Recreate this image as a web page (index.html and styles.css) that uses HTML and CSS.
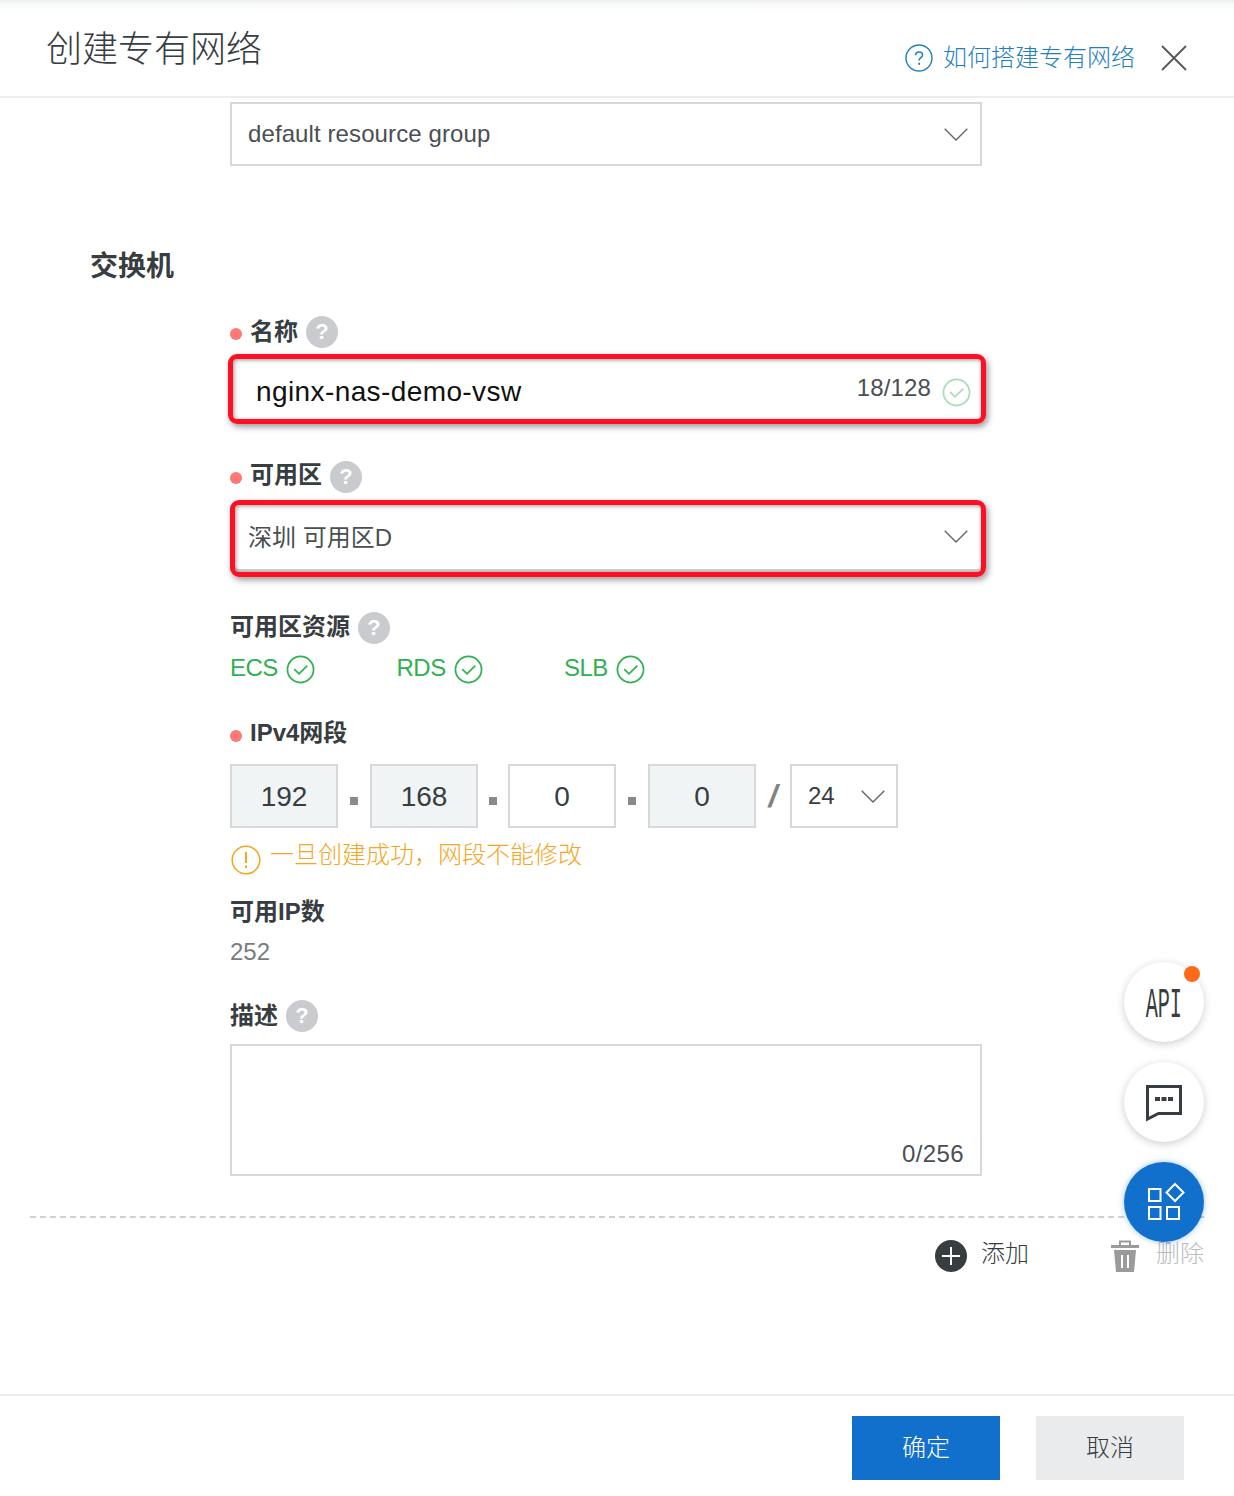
FILE: index.html
```html
<!DOCTYPE html>
<html lang="zh">
<head>
<meta charset="utf-8">
<title>创建专有网络</title>
<link rel="stylesheet" href="styles.css">
</head>
<body>
<div class="page">
  <header class="header">
    <h1 class="title">创建专有网络</h1>
    <a class="guide">
      <svg class="guide-icon" viewBox="0 0 28 28"><circle cx="14" cy="14" r="13" fill="none" stroke="#1f7fbf" stroke-width="1.4"/><path d="M10.6 11.2c0-2 1.500-3.300 3.500-3.300s3.400 1.300 3.400 3c0 2.700-3.500 2.800-3.500 5.700" fill="none" stroke="#1f7fbf" stroke-width="1.500"/><rect x="13.200" y="18.800" width="1.800" height="2" fill="#1f7fbf"/></svg>
      <span>如何搭建专有网络</span>
    </a>
    <svg class="close" viewBox="0 0 26 26"><path d="M1 1L25 25M25 1L1 25" stroke="#555" stroke-width="1.800" fill="none"/></svg>
  </header>

  <main class="form">
    <div class="box select first">
      <span class="latin">default resource group</span>
      <svg class="chevron" viewBox="0 0 24 13"><path d="M.7.7L12 12 23.300.7" fill="none" stroke="#666" stroke-width="1.400"/></svg>
    </div>

    <h2 class="section">交换机</h2>

    <div class="label l-name"><i class="dot"></i><span>名称</span><b class="help">?</b></div>
    <div class="mark mark-input">
      <span class="input-text">nginx-nas-demo-vsw</span>
      <span class="count">18/128</span>
      <svg class="ok pale" viewBox="0 0 30 30"><circle cx="15" cy="15" r="13.500"/><path d="M8.500 14.500L13.500 19.500 22 11"/></svg>
    </div>

    <div class="label l-zone"><i class="dot"></i><span>可用区</span><b class="help">?</b></div>
    <div class="mark mark-select">
      <span>深圳 可用区D</span>
      <svg class="chevron" viewBox="0 0 24 13"><path d="M.7.7L12 12 23.300.7" fill="none" stroke="#666" stroke-width="1.400"/></svg>
    </div>

    <div class="label l-res"><span>可用区资源</span><b class="help">?</b></div>
    <div class="resources">
      <div class="res r-ecs">ECS<svg class="ok" viewBox="0 0 30 30"><circle cx="15" cy="15" r="13.500"/><path d="M8.500 14.500L13.500 19.500 22 11"/></svg></div>
      <div class="res r-rds">RDS<svg class="ok" viewBox="0 0 30 30"><circle cx="15" cy="15" r="13.500"/><path d="M8.500 14.500L13.500 19.500 22 11"/></svg></div>
      <div class="res r-slb">SLB<svg class="ok" viewBox="0 0 30 30"><circle cx="15" cy="15" r="13.500"/><path d="M8.500 14.500L13.500 19.500 22 11"/></svg></div>
    </div>

    <div class="label l-ip"><i class="dot"></i><span>IPv4网段</span></div>
    <div class="ip-row">
      <div class="box octet off">192</div>
      <i class="sep"></i>
      <div class="box octet off">168</div>
      <i class="sep s2"></i>
      <div class="box octet">0</div>
      <i class="sep s3"></i>
      <div class="box octet off">0</div>
      <span class="slash">/</span>
      <div class="box mask"><span>24</span><svg class="chevron" viewBox="0 0 24 13"><path d="M.7.7L12 12 23.300.7" fill="none" stroke="#666" stroke-width="1.400"/></svg></div>
    </div>

    <div class="warn">
      <svg class="warn-icon" viewBox="0 0 30 30"><circle cx="15" cy="15" r="13.800" fill="none" stroke="#f5a623" stroke-width="1.600"/><rect x="14" y="7" width="2" height="11" fill="#f5a623"/><rect x="14" y="20.500" width="2" height="2.500" fill="#f5a623"/></svg>
      <span>一旦创建成功，网段不能修改</span>
    </div>

    <div class="label l-count"><span>可用IP数</span></div>
    <div class="value">252</div>

    <div class="label l-desc"><span>描述</span><b class="help">?</b></div>
    <div class="box area"><span class="latin">0/256</span></div>
  </main>

  <hr class="dashed">

  <div class="actions">
    <div class="action">
      <svg class="plus" viewBox="0 0 32 32"><circle cx="16" cy="16" r="16" fill="#373d41"/><path d="M16 7V25M7 16H25" stroke="#fff" stroke-width="2"/></svg>
      <span>添加</span>
    </div>
    <div class="action muted">
      <svg class="trash" viewBox="0 0 28 32"><path d="M9 5V1.500H19V5" fill="none" stroke="#9b9b9b" stroke-width="2"/><rect y="5" width="28" height="3" fill="#9b9b9b"/><path d="M3 10H25L23 32H5Z" fill="#9b9b9b"/><path d="M11 15V28M17 15V28" stroke="#fff" stroke-width="2"/></svg>
      <span>删除</span>
    </div>
  </div>

  <footer class="footer">
    <button class="btn primary">确定</button>
    <button class="btn plain">取消</button>
  </footer>

  <div class="fab fab-api"><span class="api-text">API</span><i class="badge"></i></div>
  <div class="fab fab-msg">
    <svg viewBox="0 0 36 36" class="fab-svg msg-svg"><path d="M1.500 1.500H34.500V28.500H12.500L1.500 34Z" fill="none" stroke="#373d41" stroke-width="3"/><path d="M9 12h5v4H9zM15.500 12h5v4h-5zM22 12h5v4h-5z" fill="#373d41"/></svg>
  </div>
  <div class="fab fab-apps">
    <svg viewBox="0 0 36 36" class="fab-svg"><g fill="none" stroke="#fff" stroke-width="2" transform="translate(2 -1)"><rect x="1" y="6" width="11.500" height="12"/><rect x="1" y="24" width="11.500" height="12"/><rect x="19" y="24" width="12" height="12"/><path d="M27 1L35.500 9.500 27 18 18.500 9.500Z"/></g></svg>
  </div>
</div>
</body>
</html>
```
FILE: styles.css
```css
* { box-sizing: border-box; }
html, body { margin: 0; padding: 0; background: #fff; }
body {
  font-family: "Liberation Sans", "Noto Sans CJK SC", sans-serif;
  font-size: 24px;
  color: #373d41;
}
.page { position: relative; width: 1234px; height: 1496px; overflow: hidden; }

.header {
  height: 98px;
  border-bottom: 2px solid #eeeeee;
  background: linear-gradient(#eef0f3 0, #f8f9fa 4px, #fff 12px);
  display: flex;
  align-items: flex-start;
  padding: 0 46px;
}
.title {
  margin: 22px 0 0;
  font-size: 36px;
  line-height: 48px;
  font-weight: 300;
  color: #373d41;
  font-family: "Noto Sans CJK SC", sans-serif;
}
.guide {
  margin: 39px 1px 0 auto;
  display: flex;
  align-items: center;
  height: 36px;
  color: #1f7fbf;
  font-weight: 300;
}
.guide-icon { width: 28px; height: 28px; margin-right: 10px; margin-top: 2px; }
.guide span { position: relative; top: -2px; }
.close { width: 26px; height: 26px; margin: 45px 1px 0 25px; }

.form { padding-left: 230px; width: 982px; }
.box {
  border: 2px solid #d7d8d9;
  height: 64px;
  background: #fff;
}
.select {
  display: flex;
  align-items: center;
  justify-content: space-between;
  padding: 0 12px 0 16px;
  color: #4a4f53;
}
.first { margin-top: 4px; }
.chevron { width: 24px; height: 13px; display: block; }
.latin { letter-spacing: .1px; }

.section {
  margin: 81px 0 0 -140px;
  font-size: 28px;
  line-height: 40px;
  font-weight: 700;
}
.label {
  display: flex;
  align-items: center;
  height: 32px;
  font-weight: 700;
  line-height: 30px;
}
.label span { position: relative; top: -1px; }
.dot {
  position: relative;
  top: 2px;
  width: 12px;
  height: 12px;
  border-radius: 50%;
  background: #ff7878;
  margin-right: 8px;
}
.help {
  width: 32px;
  height: 32px;
  border-radius: 50%;
  background: #c9cbce;
  color: #fff;
  margin-left: 8px;
  font-size: 22px;
  line-height: 32px;
  text-align: center;
}
.l-name { margin-top: 29px; }
.l-name span { top: 0; }
.l-zone { margin-top: 37px; }
.l-zone span { top: -2px; }
.l-zone .dot { top: 1px; }
.l-res { margin-top: 35px; }
.l-ip { margin-top: 34px; }
.l-count { margin-top: 21px; }
.l-desc { margin-top: 32px; }
.l-desc span { top: 0; }

.mark {
  display: flex;
  align-items: center;
  border: 5px solid #ff0f23;
  border-radius: 9px;
  box-shadow: 2px 3px 6px rgba(0, 0, 0, .4), inset 1px 1px 4px rgba(0, 0, 0, .4);
}
.mark-input {
  margin: 6px 0 0 -2px;
  width: 758px;
  height: 70px;
  padding: 6px 10px 0 23px;
}
.input-text { font-size: 28px; color: #111; letter-spacing: .4px; }
.count { margin-left: auto; color: #4a4f53; margin-right: 11px; letter-spacing: .15px; position: relative; top: -4px; }
.mark-select {
  margin-top: 7px;
  width: 756px;
  height: 77px;
  padding: 0 13px 6px 13px;
  justify-content: space-between;
  color: #4a4f53;
  box-shadow: 2px 3px 6px rgba(0, 0, 0, .4), inset 1px 1px 4px rgba(0, 0, 0, .4), inset 0 -3px 0 #d0d1d2;
}
.mark-select .chevron { position: relative; top: 1px; }

.ok { width: 29px; height: 29px; flex: none; }
.ok circle, .ok path { fill: none; stroke: #2fb14f; stroke-width: 1.800; }
.ok.pale circle, .ok.pale path { stroke: #a9dcbd; }

.resources {
  margin-top: 8px;
  height: 32px;
  display: flex;
  color: #2fb14f;
}
.res { display: flex; align-items: center; line-height: 28px; gap: 8px; letter-spacing: -.5px; }
.res svg { position: relative; top: 1px; }
.r-ecs { width: 166.500px; }
.r-rds { width: 167.500px; }

.ip-row { margin-top: 14px; display: flex; align-items: center; }
.octet {
  width: 108px;
  text-align: center;
  font-size: 28px;
  line-height: 62px;
}
.off { background: #f1f4f5; }
.sep {
  width: 8px;
  height: 8px;
  background: #888b8e;
  margin: 10px 12px 0 12px;
}
.s2 { margin: 10px 11px 0 11px; }
.s3 { margin: 10px 12px 0 12px; }
.slash {
  width: 34px;
  text-align: center;
  font-size: 32px;
  font-style: italic;
  font-weight: 700;
  color: #808487;
}
.mask {
  width: 108px;
  display: flex;
  align-items: center;
  justify-content: space-between;
  padding: 0 11px 0 16px;
}
.warn {
  margin-top: 16px;
  height: 32px;
  display: flex;
  align-items: center;
  color: #f5a623;
  font-weight: 300;
  padding-left: 1px;
}
.warn-icon { width: 30px; height: 30px; margin-right: 9px; flex: none; }
.warn span { position: relative; top: -8px; }
.value { margin-top: 7px; height: 32px; line-height: 32px; color: #787c80; }

.area {
  margin-top: 12px;
  height: 132px;
  display: flex;
  align-items: flex-end;
  justify-content: flex-end;
  padding: 0 16px 6px 0;
  color: #4a4f53;
}
.area .latin { letter-spacing: .4px; }

.dashed {
  margin: 40px 30px 0;
  border: 0;
  border-top: 2px dashed #cfd0d2;
  height: 0;
}
.actions {
  margin-top: 22px;
  display: flex;
  justify-content: flex-end;
  padding-right: 30px;
  gap: 82px;
  height: 32px;
}
.action { display: flex; align-items: center; gap: 14px; line-height: 26px; font-weight: 300; }
.action span { position: relative; top: -2px; }
.plus { width: 32px; height: 32px; }
.trash { width: 28px; height: 32px; }
.muted { color: #b9bcbe; gap: 17px; }

.footer {
  margin-top: 122px;
  border-top: 2px solid #eeeeee;
  padding: 20px 50px 0 0;
  display: flex;
  justify-content: flex-end;
  gap: 36px;
}
.btn {
  width: 148px;
  height: 64px;
  border: 0;
  padding: 0 0 6px;
  font: 300 24px "Noto Sans CJK SC", sans-serif;
}
.primary { background: #1170cc; color: #fff; }
.plain { background: #eaebed; color: #373d41; }

.fab {
  position: absolute;
  left: 1124px;
  width: 80px;
  height: 80px;
  border-radius: 50%;
  background: #fff;
  box-shadow: 0 2px 8px rgba(0, 0, 0, .2);
  display: flex;
  align-items: center;
  justify-content: center;
}
.fab-api { top: 962px; }
.fab-msg { top: 1062px; }
.fab-apps { top: 1162px; background: #1170cc; box-shadow: 0 0 6px rgba(17, 112, 204, .4); }
.fab-svg { width: 36px; height: 36px; display: block; overflow: visible; }
.msg-svg { position: relative; top: 1px; }
.api-text {
  position: relative;
  top: 4px;
  font-family: "Liberation Mono", monospace;
  font-size: 42px;
  line-height: 42px;
  transform: scaleX(.48);
  color: #373d41;
}
.badge {
  position: absolute;
  left: 60px;
  top: 4px;
  width: 16px;
  height: 16px;
  border-radius: 50%;
  background: #ff6a1a;
}
```
